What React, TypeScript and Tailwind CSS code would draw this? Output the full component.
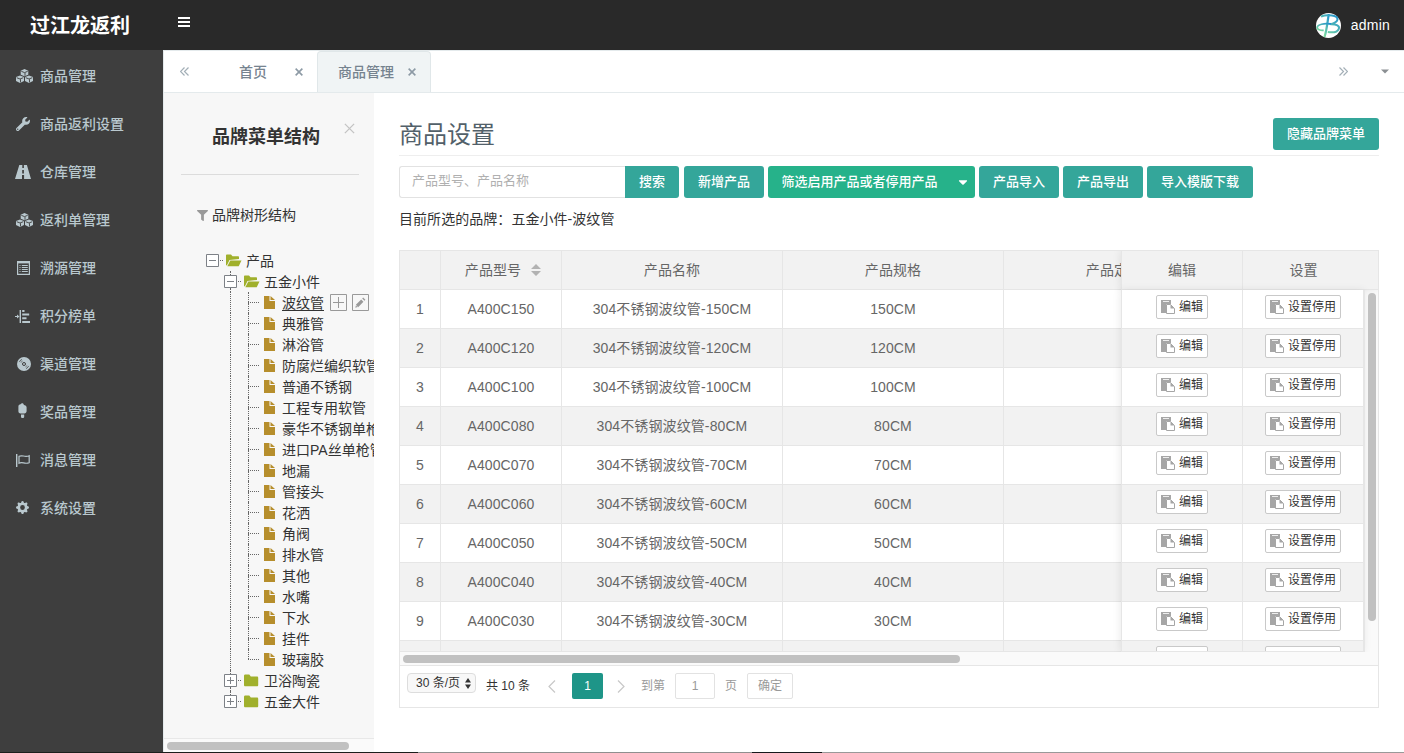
import type { ReactNode } from "react";
import { FaWrench, FaFilter, FaCaretDown } from "react-icons/fa";
import { BsGearFill } from "react-icons/bs";
import clsx from "clsx";

const CubesIcon = () => (
  <svg width="17" height="14" viewBox="0 0 17 14" className="shrink-0">
    <path
      d="M8.500 0l3.800 1.700v4L8.500 7.300 4.700 5.700v-4zM4 6.400l4 1.700v4L4 13.900 0 12.100v-4zM13 6.400l4 1.700v4l-4 1.800-4-1.800v-4z"
      fill="currentColor"
    />
    <path
      d="M5.300 2.300l3.200 1.300 3.200-1.300M9 3.800v3M.7 8.700L4 10l3.300-1.300M4.500 10.200v3.200M9.700 8.700L13 10l3.300-1.300M13.500 10.200v3.200"
      fill="none"
      stroke="#3e3e3e"
      strokeWidth=".9"
    />
  </svg>
);

const RoadIcon = () => (
  <svg width="16" height="14" viewBox="0 0 16 14" fill="currentColor" className="-ml-px">
    <path d="M4.300 0h3v3h1.600V0h3L16 14H9.100v-4H7v4H0L4.300 0zM7.200 5v3.400h1.700V5H7.200z" />
  </svg>
);

const ListIcon = () => (
  <svg width="13" height="14" viewBox="0 0 13 14" fill="none" stroke="currentColor" className="ml-px">
    <path d="M0 1.200h13" strokeWidth="2.400" />
    <path d="M.6 1v12.400h11.800V1" strokeWidth="1.200" />
    <path d="M2.500 4.500h1M2.500 6.500h1M2.500 8.500h1M4.800 4.500h6M4.800 6.500h6M4.800 8.500h6M2.500 10.500h1M4.800 10.500h6" />
  </svg>
);

const RankIcon = () => (
  <svg width="16" height="13" viewBox="0 0 16 13" fill="currentColor" className="-ml-px">
    <path d="M0 6h2V4.600l2.400 2L2 8.600V7.100H0zM4.600 0H6v13H4.600zM7.200 0h2.300v2H7.200zM7.200 3.600h7v2h-7zM7.200 7.200h4.300v2H7.200zM7.200 11H15v2H7.200z" />
  </svg>
);

const DiscIcon = () => (
  <svg width="14" height="14" viewBox="0 0 14 14" className="ml-px">
    <circle cx="7" cy="7" r="7" fill="currentColor" />
    <circle cx="7" cy="7" r="1.500" fill="none" stroke="#3e3e3e" />
    <path
      d="M2.500 4.800A5 5 0 0 1 4.800 2.500M4.200 5.300A3.200 3.200 0 0 1 5.300 4.200M11.500 9.200a5 5 0 0 1-2.300 2.300M9.800 8.700A3.200 3.200 0 0 1 8.700 9.800"
      fill="none"
      stroke="#3e3e3e"
      strokeWidth=".9"
    />
  </svg>
);

const LollyIcon = () => (
  <svg width="9" height="15" viewBox="0 0 9 15" fill="currentColor" className="mb-1 ml-[2px]">
    <path d="M2.600 1.300C3 .3 4 0 4.800.3c.7.3 1 .9 1.100 1.600 1.500 0 2.700 1 2.700 2.400V8c0 1.500-1 2.400-2.200 2.400H2.600C1.200 10.400.4 9.500.4 8.200V3.500c0-1.200.9-2.100 2.200-2.200zM3 11.500h3.200v2.200c0 .9-.6 1.300-1.600 1.300S3 14.600 3 13.700z" />
  </svg>
);

const FlagIcon = () => (
  <svg width="14" height="13" viewBox="0 0 14 13" fill="none" stroke="currentColor" strokeWidth="1.200">
    <path d="M.7 0v13" strokeWidth="1.400" />
    <path d="M3 2.300c3.500-1.800 5.500 1.300 10.200-.6v7c-4.700 1.800-6.700-1.300-10.200.5z" />
  </svg>
);

const PasteIcon = () => (
  <svg width="14" height="14" viewBox="0 0 14 14" className="shrink-0">
    <path d="M0 0h10v4H5v9H0z" fill="#a6a6a6" />
    <path d="M2 1.500h6" stroke="#fff" strokeWidth=".8" />
    <path d="M5.500 4.500h4l4 4v5h-8z" fill="#fff" stroke="#a6a6a6" />
    <path d="M9.500 4.500v4h4z" fill="#a6a6a6" />
  </svg>
);

const DoubleChevron = ({ flip }: { flip?: boolean }) => (
  <svg width="9" height="9" viewBox="0 0 9 9" fill="none" stroke="#a3afb7" strokeWidth="1.200" className={clsx(flip && "rotate-180")}>
    <path d="M4.500.5l-4 4 4 4M8.500.5l-4 4 4 4" />
  </svg>
);

const Cross = ({ size, color, width }: { size: number; color: string; width: number }) => (
  <svg width={size} height={size} viewBox="0 0 10 10" stroke={color} strokeWidth={width}>
    <path d="M.8.8l8.400 8.400M9.200.8L.8 9.200" />
  </svg>
);

const Logo = () => (
  <svg width="25" height="25" viewBox="0 0 25 25" fill="none">
    <defs>
      <linearGradient id="logo" x1="0" y1="1" x2="1" y2="0">
        <stop offset="0" stopColor="#7fdc9c" />
        <stop offset="1" stopColor="#1f8fd0" />
      </linearGradient>
    </defs>
    <circle cx="12.500" cy="12.500" r="12.500" fill="#fff" />
    <g stroke="url(#logo)">
      <path d="M12.800 1C11.500 8 11 16 8.500 24" strokeWidth="2.200" />
      <path d="M5 3.500C12 1 22 2.500 21.500 6.500c-.5 2.800-4 4-7 4.700 6-.2 9.500 1.500 8.300 4.600-1.200 3-6 4-11 3.200" strokeWidth="2" />
      <path d="M15 11C8 10 1.500 11.500 1.200 14.500c-.2 2 3 3 6.500 2.800" strokeWidth="1.800" />
    </g>
  </svg>
);

const menus: { icon: ReactNode; text: string }[] = [
  { icon: <CubesIcon />, text: "商品管理" },
  { icon: <FaWrench size={14} className="mb-px" />, text: "商品返利设置" },
  { icon: <RoadIcon />, text: "仓库管理" },
  { icon: <CubesIcon />, text: "返利单管理" },
  { icon: <ListIcon />, text: "溯源管理" },
  { icon: <RankIcon />, text: "积分榜单" },
  { icon: <DiscIcon />, text: "渠道管理" },
  { icon: <LollyIcon />, text: "奖品管理" },
  { icon: <FlagIcon />, text: "消息管理" },
  { icon: <BsGearFill size={13} className="mb-[2px]" />, text: "系统设置" },
];

const leaves = [
  "波纹管",
  "典雅管",
  "淋浴管",
  "防腐烂编织软管",
  "普通不锈钢",
  "工程专用软管",
  "豪华不锈钢单枪",
  "进口PA丝单枪管",
  "地漏",
  "管接头",
  "花洒",
  "角阀",
  "排水管",
  "其他",
  "水嘴",
  "下水",
  "挂件",
  "玻璃胶",
];

const sizes = ["150", "120", "100", "80", "70", "60", "50", "40", "30", "20"];

const Header = () => (
  <header className="flex h-[50px] shrink-0 items-center bg-[#292929] text-white">
    <div className="w-[163px] pt-[2px] pl-[30px] text-xl font-bold">过江龙返利</div>
    <div className="mb-[6px] ml-[15px] flex w-3 flex-col gap-[2px]">
      <i className="h-[2px] bg-white" />
      <i className="h-[2px] bg-white" />
      <i className="h-[2px] bg-white" />
    </div>
    <div className="ml-auto mr-[14px] flex items-center gap-[10px] text-sm font-medium tracking-[0.2px]">
      <Logo />
      admin
    </div>
  </header>
);

const Sidebar = () => (
  <aside className="w-[163px] shrink-0 bg-[#3e3e3e] pt-[2px] text-[#b9c8ce]">
    {menus.map((m) => (
      <div key={m.text} className="flex h-12 items-center text-sm font-medium">
        <span className="flex w-10 items-center pl-[16px]">{m.icon}</span>
        <span className="whitespace-nowrap">{m.text}</span>
      </div>
    ))}
  </aside>
);

const TabBar = () => (
  <div className="flex h-[43px] shrink-0 items-center border-y border-[#e4eaec] bg-white text-sm font-medium text-[#76838f]">
    <div className="flex w-[153px] items-center pl-[16px]">
      <DoubleChevron />
      <span className="ml-[50px]">首页</span>
      <span className="ml-[28px]">
        <Cross size={8} color="#8d9aa5" width={2} />
      </span>
    </div>
    <div className="flex h-full w-[114px] items-center rounded-t border-x border-t border-[#e0e7e9] bg-[#f0f4f5] pl-[20px]">
      商品管理
      <span className="ml-[14px]">
        <Cross size={8} color="#8d9aa5" width={2} />
      </span>
    </div>
    <div className="ml-auto mr-[14px] flex items-center gap-[32px]">
      <DoubleChevron flip />
      <svg width="10" height="5" viewBox="0 0 10 5" fill="#8b8f93">
        <path d="M1 .5h8L5 4.500z" />
      </svg>
    </div>
  </div>
);

const Toggle = ({ open }: { open?: boolean }) => (
  <svg width="13" height="13" viewBox="0 0 13 13" fill="#fff" stroke="#7d8187">
    <path d="M.5.500h12v12H.5z" />
    <path d={open ? "M3 6.500h7" : "M3 6.500h7M6.500 3v7"} />
  </svg>
);

const Folder = ({ open }: { open?: boolean }) =>
  open ? (
    <svg width="16" height="13" viewBox="0 0 16 13" fill="#a0b02c">
      <path d="M0 1.500C0 .8.5.500 1 .5h4l1.500 1.700H12c.7 0 1 .4 1 1V5L3.500 6 .8 11.500 0 11z" />
      <path d="M4.300 6.500H15.500L12.700 12.300H1.300z" />
    </svg>
  ) : (
    <svg width="16" height="13" viewBox="0 0 16 13" fill="#a0b02c">
      <path d="M0 2C0 1 .5.500 1.300.5h4L6.800 2.500H13c.7 0 1.200.4 1.200 1.200V11c0 .8-.4 1.300-1.200 1.300H1.300C.5 12.300 0 11.800 0 11z" />
    </svg>
  );

const FolderRow = ({ text, open, up, down }: { text: string; open?: boolean; up?: boolean; down?: boolean }) => (
  <div className="flex h-[21px] items-center">
    <div className="flex h-full w-[13px] flex-col items-center">
      <i className={clsx("h-1 w-px border-l", up ? "border-dotted border-[#666]" : "border-transparent")} />
      <Toggle open={open} />
      <i className={clsx("h-1 w-px border-l", down ? "border-dotted border-[#666]" : "border-transparent")} />
    </div>
    <i className="ml-px mr-[3px] w-[3px] border-t border-dotted border-[#666]" />
    <Folder open={open} />
    <span className="ml-1 whitespace-nowrap">{text}</span>
  </div>
);

const LeafRow = ({ text, last, active }: { text: string; last?: boolean; active?: boolean }) => (
  <div className="flex h-[21px] items-center">
    <i className="ml-[6px] h-full w-[18px] shrink-0 border-l border-dotted border-[#666]" />
    <div className="flex h-full w-[16px] shrink-0 flex-col">
      <i className="h-[10px] border-l border-dotted border-[#666]" />
      <i className="h-px w-[11px] border-t border-dotted border-[#666]" />
      {!last && <i className="h-[10px] border-l border-dotted border-[#666]" />}
    </div>
    <svg width="11" height="13" viewBox="0 0 11 13" fill="#b68e2c" className="shrink-0">
      <path d="M0 0h5.500v5H11v8H0zM6.500 0L11 4H6.500z" />
    </svg>
    <span className={clsx("ml-[7px] whitespace-nowrap", active && "underline underline-offset-2")}>{text}</span>
    {active && (
      <div className="ml-[6px] flex gap-[5px]">
        <svg width="17" height="17" viewBox="0 0 17 17" fill="none" stroke="#999">
          <path d="M.5.500h16v16H.5zM3 8.500h11M8.500 3v11" />
        </svg>
        <svg width="17" height="17" viewBox="0 0 17 17" fill="none" stroke="#999">
          <path d="M.5.500h16v16H.5z" />
          <path d="M5 12l5.300-5.300M11.300 5.700l1-1" strokeWidth="3.200" />
          <path d="M3.300 13.700l.6-2.300 1.700 1.700z" fill="#999" stroke="none" />
        </svg>
      </div>
    )}
  </div>
);

const BrandPanel = () => (
  <div className="flex w-[210px] shrink-0 flex-col overflow-hidden bg-[#f7f7f7] text-sm text-[#333]">
    <div className="ml-[17px] mr-[15px] flex h-[82px] shrink-0 border-b border-[#dcdcdc]">
      <h4 className="ml-[31px] mt-[30px] whitespace-nowrap text-lg leading-7 font-bold">品牌菜单结构</h4>
      <span className="ml-[24px] mt-[30px]">
        <Cross size={11} color="#c4c4c4" width={1.2} />
      </span>
    </div>
    <div className="mt-[29px] flex h-[22px] shrink-0 items-center pl-[33px]">
      <FaFilter size={11} color="#999" />
      <span className="ml-[4px]">品牌树形结构</span>
    </div>
    <div className="mt-[24px] h-[488px] shrink-0 overflow-hidden pl-[42px]">
      <FolderRow text="产品" open />
      <div className="pl-[18px]">
        <FolderRow text="五金小件" open up down />
        {leaves.map((t, i) => (
          <LeafRow key={t} text={t} active={i === 0} last={i === leaves.length - 1} />
        ))}
        <FolderRow text="卫浴陶瓷" up down />
        <FolderRow text="五金大件" up />
      </div>
    </div>
    <div className="h-[14px] shrink-0 border-t border-[#e8e8e8] bg-[#fafafa] pl-[3px] pt-[3px]">
      <div className="h-2 w-[182px] rounded-full bg-[#c1c1c1]" />
    </div>
  </div>
);

const Btn = ({ children, className }: { children: ReactNode; className?: string }) => (
  <button className={clsx("flex h-8 shrink-0 items-center justify-center rounded-[3px] bg-[#34a69a] text-[13px] font-medium text-white", className)}>
    {children}
  </button>
);

const Toolbar = () => (
  <div className="mt-[10px] flex h-8">
    <input
      placeholder="产品型号、产品名称"
      className="h-8 w-[226px] rounded-l-[3px] border border-r-0 border-[#e2e2e2] px-3 pb-[3px] text-[13px] placeholder:text-[#b0b0b0]"
    />
    <Btn className="mr-[5px] w-[54px] rounded-l-none">搜索</Btn>
    <Btn className="mr-1 w-20">新增产品</Btn>
    <Btn className="mr-1 w-[207px] bg-[#26b28a]!">
      筛选启用产品或者停用产品
      <FaCaretDown size={14} className="-mr-2 ml-[18px]" />
    </Btn>
    <Btn className="mr-1 w-20">产品导入</Btn>
    <Btn className="mr-1 w-20">产品导出</Btn>
    <Btn className="w-[106px]">导入模版下载</Btn>
  </div>
);

const Cell = ({ className, children }: { className: string; children?: ReactNode }) => (
  <div className={clsx("flex shrink-0 items-center justify-center border-r border-b border-[#e6e6e6] whitespace-nowrap", className)}>
    {children}
  </div>
);

const SmallBtn = ({ text, className }: { text: string; className: string }) => (
  <button
    className={clsx("mb-[5px] flex h-6 items-center justify-center gap-1 rounded-[2px] border border-[#c9c9c9] bg-white text-xs text-[#333]", className)}
  >
    <PasteIcon />
    {text}
  </button>
);

const Pager = () => (
  <div className="flex h-[42px] items-start border-t border-[#e6e6e6] pl-[7px] pt-[7px] text-xs text-[#333]">
    <div className="flex h-5 w-[69px] items-center justify-between rounded-[4px] border border-[#ddd] bg-[#f8f8f8] pl-2 pr-1">
      30 条/页
      <svg width="6" height="11" viewBox="0 0 6 11" fill="#333">
        <path d="M0 4.500L3 0l3 4.500zM0 6.500h6L3 11z" />
      </svg>
    </div>
    <div className="flex h-[26px] items-center">
      <span className="ml-[10px] w-[62px]">共 10 条</span>
      <svg width="8" height="13" viewBox="0 0 8 13" fill="none" stroke="#c8c8c8" strokeWidth="1.200">
        <path d="M7 .5l-6 6 6 6" />
      </svg>
      <span className="ml-[16px] flex h-[26px] w-[31px] items-center justify-center rounded-[2px] bg-[#1e9588] text-white">1</span>
      <svg width="8" height="13" viewBox="0 0 8 13" fill="none" stroke="#c8c8c8" strokeWidth="1.200" className="ml-[14px]">
        <path d="M1 .5l6 6-6 6" />
      </svg>
      <span className="ml-[16px] text-[#999]">到第</span>
      <span className="mx-[10px] flex h-[26px] w-10 items-center justify-center rounded-[2px] border border-[#e2e2e2] text-[#999]">1</span>
      <span className="text-[#999]">页</span>
      <span className="ml-[10px] flex h-[26px] w-[46px] items-center justify-center rounded-[2px] border border-[#e2e2e2] text-[#999]">确定</span>
    </div>
  </div>
);

const ProductTable = () => (
  <div className="mt-[20px] w-[980px] border border-[#e6e6e6] text-sm text-[#666]">
    <div className="flex h-[401px] overflow-hidden">
      <div className="h-[400px] w-[721px] overflow-hidden tracking-[0.1px]">
        <div className="flex h-[39px] bg-[#f2f2f2]">
          <Cell className="w-[41px]" />
          <Cell className="w-[121px]">
            <span className="ml-1">产品型号</span>
            <svg width="10" height="12" viewBox="0 0 10 12" fill="#b2b2b2" className="ml-[10px]">
              <path d="M0 5l5-5 5 5zM0 7h10l-5 5z" />
            </svg>
          </Cell>
          <Cell className="w-[221px]">产品名称</Cell>
          <Cell className="w-[221px]">产品规格</Cell>
          <Cell className="w-[221px]">产品定价</Cell>
        </div>
        {sizes.map((s, i) => (
          <div key={s} className={clsx("flex h-[39px]", i % 2 && "bg-[#f2f2f2]")}>
            <Cell className="w-[41px]">{i + 1}</Cell>
            <Cell className="w-[121px]">A400C{s.padStart(3, "0")}</Cell>
            <Cell className="w-[221px]">304不锈钢波纹管-{s}CM</Cell>
            <Cell className="w-[221px]">{s}CM</Cell>
            <Cell className="w-[221px]" />
          </div>
        ))}
      </div>
      {/* columns pinned to the right */}
      <div className="relative w-[257px] bg-[#fafafa]">
        <div className="flex h-[39px] border-b border-l border-[#e6e6e6] bg-[#f2f2f2] shadow-[-1px_0_8px_rgba(0,0,0,0.08)]">
          <Cell className="w-[121px] border-b-0">编辑</Cell>
          <div className="flex w-[121px] items-center justify-center">设置</div>
        </div>
        <div className="flex">
          <div className="h-[362px] w-[244px] overflow-hidden border-r border-b border-l border-[#e6e6e6] shadow-[-1px_0_8px_rgba(0,0,0,0.08)]">
            {sizes.map((s, i) => (
              <div key={s} className={clsx("flex h-[39px]", i % 2 ? "bg-[#f2f2f2]" : "bg-white")}>
                <Cell className="w-[121px]">
                  <SmallBtn text="编辑" className="w-[52px]" />
                </Cell>
                <Cell className="w-[121px]">
                  <SmallBtn text="设置停用" className="w-[76px]" />
                </Cell>
              </div>
            ))}
          </div>
          <div className="ml-[3px] mt-[3px] h-[328px] w-2 rounded-full bg-[#c1c1c1]" />
        </div>
      </div>
    </div>
    <div className="flex h-[13px] flex-col bg-[#fafafa]">
      <div className="-mt-px h-px w-[721px] bg-[#e6e6e6]" />
      <div className="mt-[3px] ml-[3px] h-2 w-[557px] rounded-full bg-[#c1c1c1]" />
    </div>
    <Pager />
  </div>
);

export default function App() {
  return (
    <div className="flex h-[753px] w-[1404px] flex-col overflow-hidden bg-white font-['Liberation_Sans','Noto_Sans_CJK_SC',sans-serif]">
      <Header />
      <div className="flex h-[702px] shrink-0">
        <Sidebar />
        <div className="flex w-[1241px] flex-col border-l border-[#e4eaec]">
          <TabBar />
          <div className="flex h-[659px] overflow-hidden">
            <BrandPanel />
            <main className="w-[1030px] pl-[25px]">
              <div className="mr-[25px] flex h-[63px] justify-between border-b border-[#eee]">
                <h3 className="mt-[26px] text-2xl leading-8 text-[#526069]">商品设置</h3>
                <Btn className="mt-[25px] w-[106px]">隐藏品牌菜单</Btn>
              </div>
              <Toolbar />
              <p className="mt-[10px] text-sm leading-[22px] tracking-[0.05px] text-[#333]">目前所选的品牌：五金小件-波纹管</p>
              <ProductTable />
            </main>
          </div>
        </div>
      </div>
      <div className="flex h-px shrink-0">
        <i className="w-[418px] bg-[#1c1e1c]" />
        <i className="w-[334px] bg-[#8f8f8f]" />
        <i className="w-[70px] bg-[#16181c]" />
        <i className="flex-1 bg-[#999]" />
      </div>
    </div>
  );
}
